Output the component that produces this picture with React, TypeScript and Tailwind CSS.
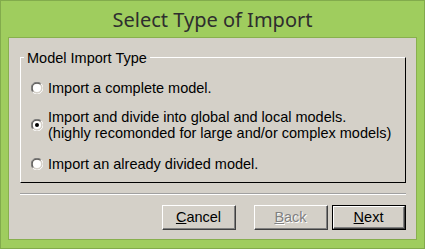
import React from "react";

function Radio({ checked }: { checked?: boolean }) {
  return (
    <svg width="12" height="12" viewBox="0 0 12 12" className="shrink-0">
      <path d="M10.2 1.8 A5.5 5.5 0 0 0 1.8 10.2" fill="none" stroke="#808080" strokeWidth="1" />
      <path d="M1.8 10.2 A5.5 5.5 0 0 0 10.2 1.8" fill="none" stroke="#ffffff" strokeWidth="1" />
      <path d="M9.5 2.5 A4.5 4.5 0 0 0 2.5 9.5" fill="none" stroke="#404040" strokeWidth="1" />
      <path d="M2.5 9.5 A4.5 4.5 0 0 0 9.5 2.5" fill="none" stroke="#d4d0c8" strokeWidth="1" />
      <circle cx="6" cy="6" r="4" fill="#ffffff" />
      {checked && <circle cx="6" cy="6" r="2" fill="#000000" />}
    </svg>
  );
}

function Button({
  children,
  isDefault,
  disabled,
}: {
  children: React.ReactNode;
  isDefault?: boolean;
  disabled?: boolean;
}) {
  const inner = (
    <div className="w-full h-full border-t border-l border-t-white border-l-white border-r border-b border-r-[#404040] border-b-[#404040]">
      <div className="w-full h-full border-r border-b border-r-[#808080] border-b-[#808080] flex items-center justify-center">
        <span
          className={
            disabled
              ? "text-[#808080] [text-shadow:1px_1px_0_#ffffff]"
              : "text-black"
          }
        >
          {children}
        </span>
      </div>
    </div>
  );
  return (
    <div
      className={
        "w-[74px] h-[25px] bg-[#d4d0c8] " +
        (isDefault ? "border border-black" : "")
      }
    >
      {inner}
    </div>
  );
}

export default function App() {
  return (
    <div
      className="w-[425px] h-[249px] bg-[#9fcd5e] border border-[#82ab4c] flex flex-col"
      style={{ fontFamily: '"Liberation Sans", Arial, sans-serif' }}
    >
      <div
        className="h-[36px] flex items-center justify-center text-[20px] text-[#2e2e2e] pt-[1px]"
        style={{ fontFamily: '"Noto Sans", "Open Sans", sans-serif' }}
      >
        Select Type of Import
      </div>
      <div className="mx-[7px] h-[203px] bg-[#d4d0c8] border border-[#88b04e] text-[14.5px] leading-[16px] text-black">
        <div className="relative ml-[11px] mt-[19px] w-[386px] h-[126px] border-t border-l border-t-white border-l-white border-r border-b border-r-black border-b-black">
          <div className="absolute left-[3px] top-[-8px] px-[3px] bg-[#d4d0c8]">
            Model Import Type
          </div>
          <div className="flex items-center gap-[5px] pl-[10px] mt-[22px]">
            <Radio />
            <span>Import a complete model.</span>
          </div>
          <div className="flex items-center gap-[5px] pl-[10px] mt-[13px]">
            <Radio checked />
            <span>
              Import and divide into global and local models.
              <br />
              (highly recomonded for large and/or complex models)
            </span>
          </div>
          <div className="flex items-center gap-[5px] pl-[10px] mt-[15px]">
            <Radio />
            <span>Import an already divided model.</span>
          </div>
        </div>
        <div className="ml-[11px] mt-[10px] w-[386px] border-t border-t-[#a0a0a0] border-b border-b-white" />
        <div className="ml-[11px] mt-[10px] w-[386px] flex justify-end">
          <Button>
            <span className="underline">C</span>ancel
          </Button>
          <div className="w-[18px]" />
          <Button disabled>
            <span className="underline">B</span>ack
          </Button>
          <div className="w-[4px]" />
          <Button isDefault>
            <span className="underline">N</span>ext
          </Button>
        </div>
      </div>
    </div>
  );
}
